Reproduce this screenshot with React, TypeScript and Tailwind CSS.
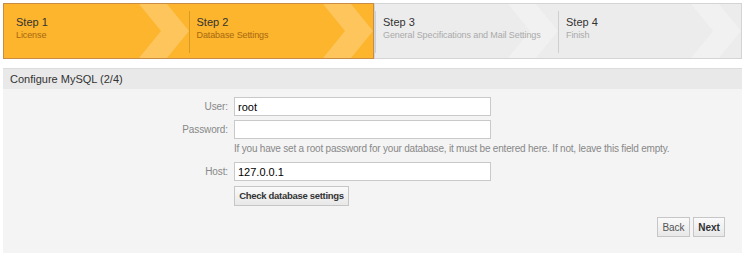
import React from "react";

const font = { fontFamily: '"Liberation Sans", Arial, Helvetica, sans-serif' };

function Chevron({ color }: { color: string }) {
  // light arrow band painted behind the step text
  return (
    <svg
      className="absolute right-0 top-0 h-full w-[52px]"
      viewBox="0 0 52 55"
      preserveAspectRatio="none"
    >
      <polygon points="2,0 30,0 52,27.5 30,55 2,55 24,27.5" fill={color} />
    </svg>
  );
}

function Step({
  num,
  label,
  active,
  first,
}: {
  num: number;
  label: string;
  active: boolean;
  first: boolean;
}) {
  return (
    <div className="relative flex-1 h-full flex items-center">
      <Chevron color={active ? "#fdc55c" : "#f1f1f1"} />
      {!first && (
        <div
          className={`absolute left-0 top-[7px] bottom-[5px] w-px ${active ? "bg-[#d99a26]" : "bg-[#cfcfcf]"}`}
        />
      )}
      <div className={`relative -mt-[6px] whitespace-nowrap ${first ? "pl-[12px]" : "pl-[8px]"}`}>
        <div className="text-[11px] leading-[13px] text-[#333]">Step {num}</div>
        <div
          className={`text-[9px] leading-[12px] tracking-[-0.1px] ${active ? "text-[#a8680f]" : "text-[#aaaaaa]"}`}
        >
          {label}
        </div>
      </div>
    </div>
  );
}

function Row({ label, children }: { label: string; children: React.ReactNode }) {
  return (
    <div className="flex items-center">
      <div className="w-[231px] pr-[6px] text-right text-[10px] tracking-[-0.1px] text-[#888]">{label}</div>
      {children}
    </div>
  );
}

function TextInput({ value }: { value?: string }) {
  return (
    <input
      readOnly
      value={value ?? ""}
      className="w-[257px] h-[19px] border border-[#c9c9c9] bg-white px-[3px] text-[11px] text-black outline-none"
      style={font}
    />
  );
}

export default function App() {
  return (
    <div className="w-[745px] h-[258px] bg-white px-[3px] pt-[3px]" style={font}>
      {/* steps */}
      <div className="flex h-[56px]">
        <div className="flex w-[371px] h-full border border-[#c98c45] bg-[#fcb52d] overflow-hidden">
          <Step num={1} label="License" active first />
          <Step num={2} label="Database Settings" active first={false} />
        </div>
        <div className="flex flex-1 h-full border border-[#d4d4d4] bg-[#ececec] overflow-hidden">
          <Step num={3} label="General Specifications and Mail Settings" active={false} first={false} />
          <Step num={4} label="Finish" active={false} first={false} />
        </div>
      </div>

      {/* panel */}
      <div className="mt-[9px]">
        <div className="h-[21px] border-t border-[#dcdcdc] bg-[#e9e9e9] pl-[7px] flex items-center text-[11px] text-[#333]">
          Configure MySQL (2/4)
        </div>
        <div className="bg-[#f4f4f4] h-[164px] pt-[8px] flex flex-col">
          <div className="flex flex-col gap-[4px]">
            <Row label="User:">
              <TextInput value="root" />
            </Row>
            <Row label="Password:">
              <TextInput />
            </Row>
          </div>
          <div className="pl-[231px] mt-[3px] text-[10px] leading-[14px] tracking-[-0.2px] text-[#888] whitespace-nowrap">
            If you have set a root password for your database, it must be entered here. If not, leave this field empty.
          </div>
          <div className="mt-[6px]">
            <Row label="Host:">
              <TextInput value="127.0.0.1" />
            </Row>
          </div>
          <div className="pl-[231px] mt-[1px]">
            <button
              className="h-[20px] w-[115px] whitespace-nowrap border border-[#c6c6c6] bg-gradient-to-b from-[#fafafa] to-[#e8e8e8] text-[9.5px] font-bold tracking-[-0.3px] text-[#333]"
              style={font}
            >
              Check database settings
            </button>
          </div>
          <div className="flex justify-end gap-[3px] pr-[17px] mt-[11px]">
            <button
              className="h-[20px] w-[33px] border border-[#c6c6c6] bg-gradient-to-b from-[#fafafa] to-[#e8e8e8] text-[10px] text-[#555]"
              style={font}
            >
              Back
            </button>
            <button
              className="h-[20px] w-[32px] border border-[#c6c6c6] bg-gradient-to-b from-[#fafafa] to-[#e8e8e8] text-[10px] font-bold text-[#333]"
              style={font}
            >
              Next
            </button>
          </div>
        </div>
      </div>
    </div>
  );
}
